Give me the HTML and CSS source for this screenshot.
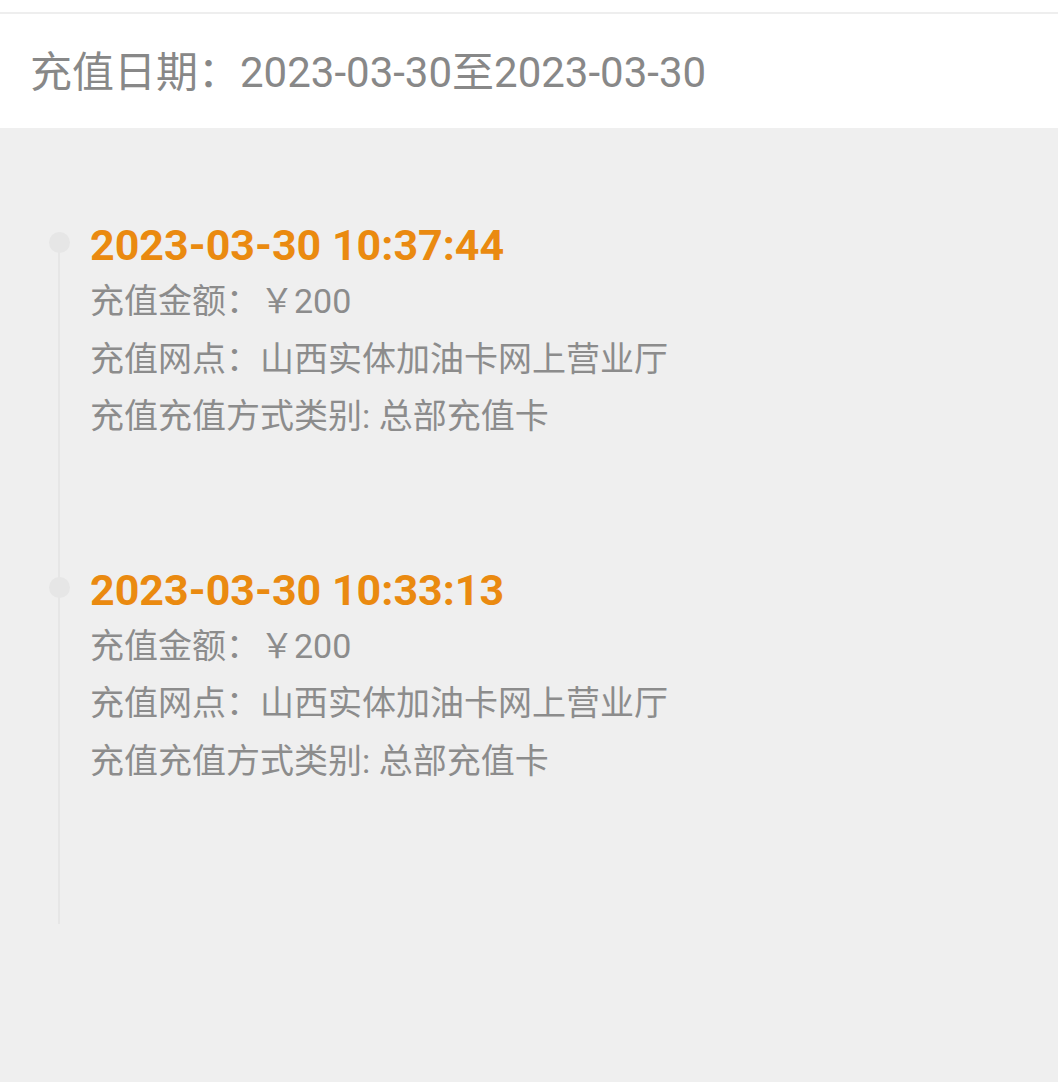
FILE: index.html
```html
<!DOCTYPE html>
<html lang="zh-CN">
<head>
    <meta charset="UTF-8">
    <meta name="viewport" content="width=device-width, initial-scale=1.0">
    <title>充值记录</title>
    <link rel="stylesheet" href="styles.css">
</head>
<body>
    <div class="top-bar"></div>

    <!-- 查询日期 -->
    <div class="date-header">充值日期：2023-03-30至2023-03-30</div>

    <!-- 充值记录时间线 -->
    <div class="timeline">
        <ul class="tl-list">
            <li class="tl-item">
                <span class="tl-dot"></span>
                <div class="tl-time">2023-03-30 10:37:44</div>
                <p class="tl-line">充值金额：￥200</p>
                <p class="tl-line">充值网点：山西实体加油卡网上营业厅</p>
                <p class="tl-line">充值充值方式类别: 总部充值卡</p>
            </li>
            <li class="tl-item">
                <span class="tl-dot"></span>
                <div class="tl-time">2023-03-30 10:33:13</div>
                <p class="tl-line">充值金额：￥200</p>
                <p class="tl-line">充值网点：山西实体加油卡网上营业厅</p>
                <p class="tl-line">充值充值方式类别: 总部充值卡</p>
            </li>
        </ul>
    </div>
</body>
</html>
```

FILE: styles.css
```css
body {
    margin: 0;
    padding: 0;
    background: #efefef;
    font-family: Roboto, "Noto Sans CJK SC", sans-serif;
    min-height: 1082px;
}

/* Üst şerit */
.top-bar {
    height: 12px;
    background: #ffffff;
    border-bottom: 2px solid #eeeeee;
}

/* Tarih başlığı */
.date-header {
    height: 114px;
    background: #ffffff;
    display: flex;
    align-items: center;
    padding-left: 30px;
    padding-bottom: 6px;
    box-sizing: border-box;
    font-size: 42px;
    color: #888888;
}

/* Zaman çizelgesi */
.timeline {
    padding-top: 89px;
}

.tl-list {
    list-style: none;
    margin: 0 0 0 58px;
    padding: 0 0 134px 32px;
    position: relative;
}

.tl-list::before {
    content: "";
    position: absolute;
    left: 0;
    top: 26px;
    bottom: 0;
    width: 2px;
    background: #e6e6e6;
}

.tl-item {
    position: relative;
    padding-bottom: 116px;
}

.tl-item:last-child {
    padding-bottom: 0;
}

.tl-dot {
    position: absolute;
    left: -41px;
    top: 15px;
    width: 21px;
    height: 21px;
    border-radius: 50%;
    background: #e6e6e6;
}

.tl-time {
    font-size: 43px;
    line-height: 56px;
    font-weight: bold;
    color: #ea8a10;
}

.tl-line {
    margin: 0;
    font-size: 34px;
    line-height: 57.5px;
    color: #8c8c8c;
}
```
